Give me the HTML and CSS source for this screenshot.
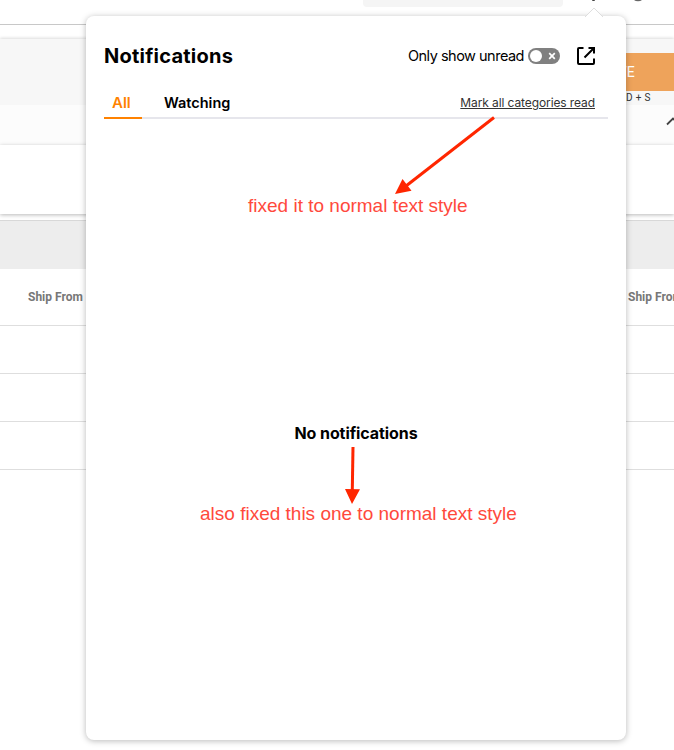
FILE: index.html
```html
<!DOCTYPE html>
<html lang="en">
<head>
<meta charset="utf-8">
<title>Notifications</title>
<link rel="stylesheet" href="styles.css">
</head>
<body>
<div class="page">
  <header class="topbar">
    <div class="search"></div>
    <svg class="top-icons" width="60" height="4" viewBox="0 0 60 4"><path d="M9 0h3l-.5 1h-2z" fill="#444"/><path d="M51 0h8q-1.500 1.200-4 1.200T51 0z" fill="#666"/></svg>
  </header>
  <section class="toolbar">
    <div class="save-group">
      <button class="save">SAVE</button>
      <span class="shortcut">CMD + S</span>
    </div>
  </section>
  <section class="collapse"><svg width="12" height="9" viewBox="0 0 12 9"><path d="M1 7.5l6-6 6 6" fill="none" stroke="#444" stroke-width="1.8"/></svg></section>
  <section class="summary"></section>
  <section class="table">
    <div class="table-bar"></div>
    <div class="row head"><span>Ship From</span><span>Ship From</span></div>
    <div class="row"></div>
    <div class="row"></div>
    <div class="row"></div>
  </section>
</div>

<aside class="popup">
  <svg class="caret" width="20" height="10" viewBox="0 0 20 10"><path d="M1 10l9-9 9 9z" fill="#fff"/><path d="M1 10l9-9 9 9" fill="none" stroke="#dedede"/></svg>
  <div class="title-row">
    <h1>Notifications</h1>
    <span class="unread">Only show unread</span>
    <span class="toggle"><i></i><svg width="8" height="8" viewBox="0 0 8 8"><path d="M1.2 1.2l5.6 5.6M6.8 1.2L1.2 6.8" stroke="#fff" stroke-width="1.7"/></svg></span>
    <svg class="open" width="20" height="20" viewBox="0 0 20 20" fill="none" stroke="#000" stroke-width="2"><path d="M7.500 2H3Q2 2 2 3v14q0 1 1 1h14q1 0 1-1v-4.500M12.500 2H18v5.500M18 2L8.500 11.500"/></svg>
  </div>
  <nav class="tabs">
    <span class="tab active">All</span>
    <span class="tab watching">Watching</span>
    <a class="mark">Mark all categories read</a>
  </nav>
  <p class="empty">No notifications</p>
</aside>

<svg class="arrows" width="674" height="750" viewBox="0 0 674 750">
  <g stroke="#ff2600" stroke-width="3" fill="#ff2600">
    <path d="M494 117.500L406 186"/>
    <path d="M353 447L352.300 490"/>
    <path stroke="none" d="M395 194l7.500-15 9 11.700zM352 504l-7-15 15 .2z"/>
  </g>
</svg>
<p class="note first">fixed it to normal text style</p>
<p class="note second">also fixed this one to normal text style</p>
</body>
</html>
```
FILE: styles.css
```css
* { box-sizing: border-box; }
body { margin: 0; height: 750px; overflow: hidden; position: relative; background: #fff; font-family: Inter, sans-serif; color: #000; }
.page { width: 674px; overflow: hidden; font-family: Roboto, sans-serif; }
.topbar { height: 25px; border-bottom: 1px solid #c8c8c8; display: flex; align-items: flex-start; padding-left: 363px; }
.search { width: 200px; height: 7px; background: #f5f5f5; border-radius: 0 0 4px 4px; }
.top-icons { margin-left: 20px; }
.toolbar { margin-top: 14px; height: 66px; background: #f7f7f7; box-shadow: 0 -1px 3px rgba(0,0,0,.14); display: flex; justify-content: flex-end; padding-top: 14px; }
.save-group { width: 94px; display: flex; flex-direction: column; }
.save { height: 38px; border: 0; padding: 0 39px 0 0; background: #eea35b; color: #fff; font: 400 14px/38px Roboto, sans-serif; text-align: right; letter-spacing: .2px; }
.shortcut { font-size: 10px; line-height: 13px; color: #333; padding-left: 30px; letter-spacing: .35px; white-space: nowrap; }
.collapse { height: 40px; background: #fcfcfc; display: flex; justify-content: flex-end; padding-top: 12px; }
.collapse svg { margin-right: -4px; }
.summary { position: relative; height: 69px; background: #fff; box-shadow: 0 1px 4px rgba(0,0,0,.28); }
.table { margin-top: 6px; border-top: 1px solid #d8d8d8; }
.table-bar { height: 48px; background: #ededed; }
.row { height: 48px; border-bottom: 1px solid #dedede; }
.head { height: 57px; display: grid; grid-template-columns: 600px 600px; align-items: center; color: #777; font-size: 12px; font-weight: 700; }
.head span { padding-left: 28px; }
.popup { position: absolute; left: 86px; top: 16px; width: 540px; height: 724px; background: #fff; border-radius: 8px; box-shadow: 0 1px 6px rgba(0,0,0,.28); padding: 26px 18px 0; display: flex; flex-direction: column; }
.caret { position: absolute; left: 498px; top: -9px; }
.title-row { height: 28px; display: flex; align-items: center; }
h1 { margin: 0 auto 0 0; font-size: 20px; line-height: 28px; font-weight: 700; letter-spacing: .24px; }
.unread { font: 14.500px/20px Inter, sans-serif; letter-spacing: -.5px; margin-right: 4px; }
.toggle { width: 32px; height: 16px; border-radius: 8px; background: #808080; display: flex; align-items: center; justify-content: space-between; padding: 0 4px 0 2px; }
.toggle i { width: 12px; height: 12px; border-radius: 50%; background: #fff; }
.open { margin: 0 12px 0 16px; }
.tabs { height: 33px; margin-top: 16px; display: flex; border-bottom: 2px solid #e6e6ec; }
.tab { height: 33px; font-size: 14.500px; line-height: 34px; font-weight: 600; padding: 0 8px; }
.active { width: 38px; font-size: 15px; color: #ff8200; border-bottom: 2px solid #ff8200; }
.watching { margin-left: 14px; }
.mark { margin-left: auto; margin-right: 13px; font-size: 12px; line-height: 34px; letter-spacing: -.1px; color: #333; text-decoration: underline; }
.empty { margin: 303px 0 0; text-align: center; font-size: 16px; line-height: 22px; font-weight: 700; letter-spacing: -.08px; }
.arrows { position: absolute; left: 0; top: 0; }
.note { position: absolute; margin: 0; font: 19px/24px "Liberation Sans", sans-serif; color: #ff493c; white-space: nowrap; }
.first { left: 248px; top: 194px; }
.second { left: 200px; top: 502px; }
```
